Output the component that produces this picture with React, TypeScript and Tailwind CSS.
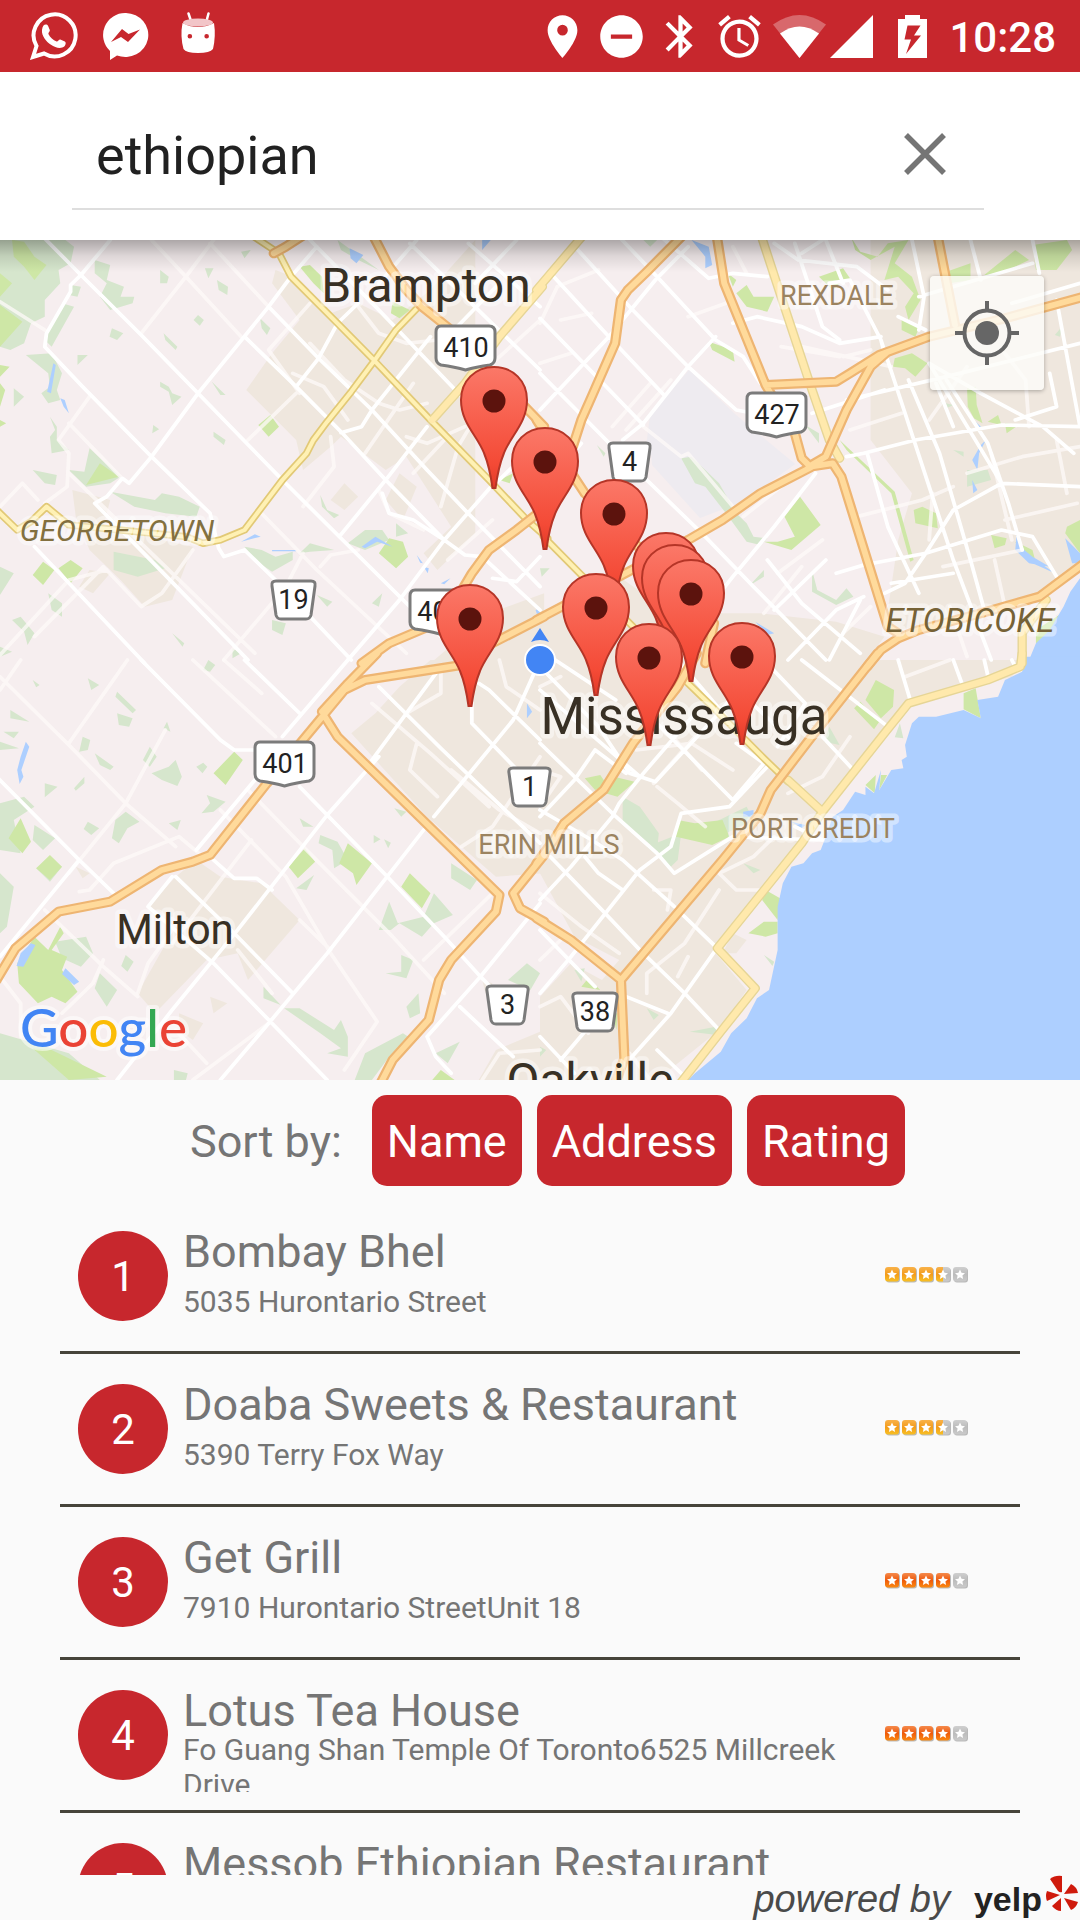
import React, { useState } from "react";
import { MdAlarm, MdBluetooth, MdLocationOn, MdRemoveCircle } from "react-icons/md";

/* ---------- Map data: four tiles, each 1568 x 1260 units ---------- */

type Tile = {
  x: number;
  y: number;
  urban: string;
  forest: string;
  park: string;
  water: string;
  lanes: string;
  streets: string;
  routes: string;
  arterials: string;
  highways: string;
};

const TILES: Tile[] = [
  {
    x: 0,
    y: 240,
    urban:
      "M800,90 L850,110 L960,220 L1040,190 L1140,240 L1250,150 L1380,0 L1380,880 L1340,920 L1270,990 L1230,940 L1310,860 L1180,650 L1120,690 L990,590 L960,620 L880,690 L860,600 L715,450 L790,340 L870,240 L790,130Z M1160,700 L1210,740 L1170,840 L1120,780Z M1000,730 L1040,770 L1000,810 L960,780Z M210,750 L320,780 L300,860 L470,900 L560,920 L500,1080 L420,1100 L350,1020 L260,930 L220,830Z M260,990 L320,1000 L270,1060 L230,1040Z M1250,1270 L1420,1120 L1580,1060 L1580,1270Z",
    forest:
      "M0,0 L190,0 L215,20 L205,70 L170,90 L175,130 L130,180 L130,230 L90,250 L70,310 L30,330 L0,320Z M180,190 L215,200 L150,320 L130,300Z M275,60 L320,75 L310,120 L360,140 L350,170 L390,170 L385,190 L320,210 L290,170 L310,130 L275,100Z M205,135 L235,140 L225,170 L200,165Z M75,345 L150,340 L180,400 L165,450 L175,480 L140,490 L120,460 L145,440 L140,400Z M225,345 L255,345 L225,375Z M465,90 L490,110 L485,130 L465,130Z M595,85 L620,85 L605,115Z M630,120 L662,140 L660,165 L635,150Z M700,35 L728,30 L710,55Z M755,235 L785,265 L775,285 L760,265Z M325,265 L358,280 L340,300 L318,290Z M475,280 L515,320 L510,330 L480,300Z M575,225 L592,240 L580,257 L562,240Z M465,425 L490,440 L500,460 L527,470 L500,495 L490,455 L465,440Z M615,425 L655,465 L640,465Z M620,575 L655,600 L650,615 L620,590Z M445,555 L462,568 L442,580Z M40,445 L70,470 L40,500Z M145,530 L165,560 L165,600 L200,630 L150,640 L145,590 L160,570Z M95,690 L165,705 L160,735 L130,730Z M260,625 L350,710 L320,730 L250,740 L200,690 L245,695Z M320,755 L450,780 L470,760 L520,770 L580,800 L570,830 L480,820 L390,800Z M330,935 L450,960 L480,985 L400,1010 L330,990Z M710,920 L760,930 L800,950 L850,935 L850,960 L790,995 L740,960Z M870,940 L900,910 L970,930 L900,935Z M930,765 L950,810 L985,825 L970,835 L935,800Z M1010,910 L1060,870 L1110,870 L1130,900 L1060,930Z M140,1060 L180,1090 L180,1130 L150,1110Z M35,1140 L60,1130 L100,1180 L80,1215 L70,1175Z M790,1140 L830,1150 L820,1185 L790,1170Z M1080,1090 L1110,1060 L1100,1100Z M920,1065 L965,1085 L950,1100Z M500,1180 L535,1210 L530,1220Z M1150,850 L1185,880 L1150,890Z M0,980 L40,1000 L0,1065Z M0,1220 L35,1235 L0,1250Z M675,1225 L700,1240 L675,1255Z M980,0 L1100,90 L1040,60 L990,30Z",
    park:
      "M35,0 L70,5 L100,50 L135,75 L100,120 L70,80 L40,50Z M0,100 L35,130 L0,170Z M0,195 L65,245 L0,320Z M0,375 L28,380 L0,410Z M0,430 L15,450 L0,500Z M750,555 L785,525 L810,560 L780,590Z M870,80 L900,75 L935,110 L940,160 L910,130Z M1130,895 L1170,905 L1185,950 L1150,985 L1100,940Z M95,1005 L125,965 L158,990 L125,1035Z M250,735 L290,670 L345,710Z M170,985 L205,960 L240,985 L205,1030Z M1140,185 L1190,210 L1160,235 L1135,220Z M1450,720 L1490,700 L1480,730Z M0,540 L18,550 L0,560Z",
    water:
      "M1015,25 L1055,45 L1035,70 L1018,55Z M1400,0 L1425,0 L1400,30Z M155,370 L162,375 L148,460 L137,455Z M175,475 L188,480 L200,520 L185,500Z M1050,920 L1090,890 L1140,920 L1095,905 L1060,925Z M700,905 L740,883 L757,890Z M790,930 L860,930 L860,934 L790,934Z M1210,945 L1228,970 L1220,968Z M1230,980 L1245,985 L1242,1000Z M1280,1030 L1308,1015 L1290,1033Z M1555,1110 L1568,1105 L1568,1150Z",
    lanes:
      "M440,0 L540,110 L700,290 M620,0 L540,110 L410,280 M610,10 L780,200 M0,185 L130,270 M900,190 L780,330 L870,460 M860,460 L720,600 M260,470 L170,600 L200,640 L195,740 L130,790 M200,550 L350,710 M200,700 L420,920 L740,1240 M0,800 L65,730 L110,780 M560,930 L470,1060 L410,1100 L300,980 L100,1190 M310,990 L200,1020 L0,1245 M750,810 L920,990 L1180,1240 M880,940 L830,1040 L650,1260 M930,980 L960,945 L1040,930 M960,590 L970,680 L880,800 M1040,200 L1100,280 L1180,310 L1270,300 M900,310 L1000,420 L1100,490 L1160,510 L1240,490 M850,400 L940,440 L1010,540 M1200,430 L1060,640 M1290,600 L1200,700 M1400,500 L1330,620 L1280,800 M1350,560 L1240,610 L1180,590 M1568,240 L1440,360 M1430,840 L1300,960 M1100,750 L1130,820 L1230,870",
    streets:
      "M115,-20 L235,105 L410,285 L575,460 L820,720 L990,895 L1180,1090 L1350,1260 M320,0 L235,105 L205,135 L205,155 L135,280 L130,320 L240,440 L440,650 L610,820 L635,925 L650,950 L710,930 L800,1020 L1020,1260 M920,20 L845,110 L780,200 L575,460 L440,650 L375,730 L355,715 L310,770 L275,790 L470,995 L720,1260 M100,920 L420,1270 M780,200 L925,355 L1080,510 L1240,690 L1350,810 L1568,1040 M710,290 L860,440 L990,575 L1120,720 L1290,900 L1350,945 L1400,950 L1568,1110 M900,0 L1100,210 L1350,480 M1190,10 L1568,390 M1360,10 L1568,200 M1040,190 L980,250 L925,355 L860,440 M1250,290 L1080,510 L1050,560 L990,578 M1450,130 L1290,300 M1240,560 L1120,720 L985,890 M1430,735 L1290,900 L1160,1080 L1010,1260 M1430,1015 L1500,1025 L1568,950 M1110,760 L1130,820 L1200,840 L1290,900 M1210,0 L1100,130 M1568,600 L1430,740 M1500,0 L1380,130",
    routes:
      "M730,-15 L810,40 L845,110 L980,250 L1085,360 L1250,540 L1420,720 L1530,840 L1590,895 M1220,195 L1150,270 L1085,365 L1020,455 L950,545 L910,600 L890,640 L820,720 L710,870 L640,900 L590,910 L540,890 L200,855 L135,800 L90,845 L50,870 L-10,810",
    arterials: "M1575,140 L1450,290 L1350,430 L1255,540",
    highways:
      "M890,-20 L830,20 L795,40 M1080,-20 L1130,80 L1180,150 L1225,200 L1310,270 L1430,400 L1580,560 M1580,805 L1500,870 L1420,930 L1370,1000 L1290,1140 L1130,1210 L1050,1270 M1580,1130 L1420,1215",
  },
  {
    x: 540,
    y: 240,
    urban:
      "M960,0 L1568,0 L1568,1000 L1450,1080 L1000,1180 L1040,900 L1080,760 L960,600Z M430,1120 L640,1120 L860,1145 L1000,1190 L950,1260 L0,1260 L0,1130 L200,1040Z M230,1010 L340,1090 L320,1170 L240,1150Z",
    forest:
      "M410,655 L440,650 L520,730 L570,820 L600,850 L620,890 L660,895 L640,915 L600,905 L540,820 L480,740 L450,730Z M165,615 L190,640 L185,650Z M790,990 L805,1050 L860,1080 L890,1045 L910,1070 L860,1095 L790,1055Z M610,1035 L650,990 L650,1010Z M1160,485 L1200,495 L1180,505Z M1200,630 L1230,635 L1230,650Z M300,0 L340,0 L320,20Z M1240,690 L1300,690 L1310,720 L1240,740Z M0,985 L28,985 L5,1010Z M770,555 L810,580 L810,610Z M1495,285 L1515,260 L1510,290Z",
    park:
      "M905,-5 L930,35 L980,50 L1010,10 L1070,0 L1030,70 L1080,110 L1105,180 L1070,240 L1060,200 L1085,160 L1040,110 L1000,120 L1030,20 L960,60 L915,30Z M1430,15 L1530,0 L1545,30 L1500,90 L1440,90Z M570,160 L600,135 L620,170 L680,170 L660,215 L600,200Z M810,110 L880,85 L910,130 L880,120 L850,150Z M1180,95 L1250,70 L1250,120 L1190,130Z M1290,105 L1380,30 L1420,60 L1330,105Z M490,305 L560,330 L565,365 L500,330Z M1050,235 L1100,265 L1090,290 L1050,270Z M1030,355 L1080,340 L1125,370 L1090,410 L1060,385 L1025,380Z M1240,445 L1265,440 L1268,495 L1285,550 L1260,535 L1242,500Z M1300,545 L1330,525 L1340,555Z M1350,550 L1390,555 L1355,580Z M870,600 L1030,755 L1085,960 L1075,965 L1020,760 L890,630Z M755,770 L815,855 L730,930 L650,905 L690,905 L740,890 L710,830Z M1085,810 L1110,800 L1150,820 L1155,865 L1090,850Z M1310,885 L1355,895 L1350,915 L1320,925Z M1380,905 L1430,930 L1440,970 L1400,945Z M1530,860 L1568,840 L1568,940 L1525,880Z M1440,1170 L1530,1110 L1490,1210 L1440,1210Z M545,100 L570,120 L560,140Z",
    water:
      "M440,0 L490,20 L500,75 L480,85 L480,50Z M1525,895 L1568,940 L1568,970 L1545,970Z M1575,1005 L1540,1055 L1520,1100 L1480,1170 L1440,1210 L1420,1260 L1575,1265Z M1295,600 L1275,640 L1270,690 L1255,660 L1280,615Z M1255,720 L1270,750 L1258,760Z M1385,870 L1395,920 L1430,950 L1480,980 L1420,970 L1380,930Z M1400,945 L1440,960 L1495,1000 L1430,970Z M1265,545 L1290,570 L1275,570Z M625,1145 L680,1180 L660,1185Z",
    lanes:
      "M0,250 L50,140 L170,90 M0,370 L90,340 M60,240 L150,220 M430,230 L540,190 M300,560 L410,650 L430,640 L560,800 M320,430 L210,560 M380,420 L250,570 M560,20 L600,100 M880,350 L960,330 M700,320 L870,350 M900,570 L1050,520 M920,830 L1110,780 L1200,740 M1240,700 L1400,650 L1568,620 M1350,840 L1560,790 M1140,760 L1130,900 M1170,980 L1400,930 M1310,640 L1370,900 M1500,600 L1530,760 M650,1120 L760,980 M590,830 L700,740 M820,900 L690,1000 M1130,540 L1240,380 M760,320 L1020,380 M1350,340 L1410,420 L1420,560 M1190,1100 L1240,1250 M1320,960 L1350,1100 M880,1180 L960,1100",
    streets:
      "M110,30 L260,200 L430,380 L570,510 L620,520 M40,110 L200,290 L360,465 M0,235 L300,555 M0,400 L230,640 L470,880 L620,1040 L830,1260 M220,-20 L340,110 L510,300 L590,350 L640,430 M340,-20 L490,115 L560,100 L660,110 M430,20 L335,120 L200,290 L0,510 M510,290 L430,380 L300,550 L240,600 M120,610 L0,760 M800,700 L680,860 L560,1010 L430,1180 M560,250 L630,230 L760,260 L870,310 L990,290 M680,10 L750,60 L920,80 L1010,150 M740,10 L820,260 L870,300 M760,40 L820,0 M840,130 L900,120 L990,300 L1060,520 L1200,960 L1310,1260 M830,0 L880,130 M1080,0 L1115,170 L1100,270 M1250,0 L1280,120 M1430,0 L1450,100 M990,300 L1000,340 M890,650 L940,640 L1090,600 L1340,555 L1568,560 M860,1000 L940,975 L1120,940 L1340,870 L1430,890 L1500,1010 M890,480 L1180,410 L1568,310 M1000,1060 L1060,1030 L1120,940 L1200,810 L1340,730 L1568,740 M1070,420 L1160,640 L1250,960 L1290,1110 M1130,370 L1340,730 M1130,370 L1280,460 L1460,560 L1550,640 M1180,420 L1300,610 L1360,790 L1400,930 M790,520 L1000,450 M950,640 L1010,860 L1100,1060 M1480,400 L1500,500 L1380,540 M1040,230 L1120,270 M1100,170 L1430,70 M1370,190 L1568,130 M1500,180 L1568,560 M1200,560 L1150,430 M940,1070 L860,1110 L720,1260 M830,960 L680,1110 M930,1080 L840,1260 M1020,1030 L1200,1000 M660,960 L760,1090 L930,1240",
    routes: "M10,890 L120,1005 L270,1160 L380,1280",
    arterials:
      "M130,-20 L-10,150 M640,-20 L700,170 L780,420 L840,600 L870,655 M1470,1080 L1400,1180 L1400,1270",
    highways:
      "M430,-30 L310,95 L255,150 L235,180 L218,310 L150,470 L120,540 L95,620 M512,-20 L535,130 L655,435 L860,425 L900,400 L985,345 L1130,290 L1350,235 L1580,170 M1153,-20 L1205,255 M1010,335 L960,380 L890,510 L830,650 L780,680 M655,435 L740,580 L760,655 L785,680 L850,670 L875,710 L1010,1160 L1040,1180 M790,680 L640,760 L530,840 L430,900 L230,1010 L-10,1140 M-10,540 L130,760 L420,1060 L505,1150 L480,1270 M1580,970 L1450,1070 L1280,1120 L1100,1170 L1040,1195 L990,1230 L950,1280",
  },
  {
    x: 0,
    y: 660,
    urban:
      "M1090,160 L1160,80 L1250,0 L1580,0 L1580,640 L1440,650 L1240,470 L1020,220Z M510,650 L570,600 L640,650 L760,670 L870,780 L720,960 L690,880 L600,900 L450,1060 L400,1000 L520,780 L430,740Z M520,1060 L590,1090 L560,1140 L520,1110Z M610,1010 L660,1030 L620,1060Z M220,620 L260,640 L240,655Z M1440,1170 L1580,1110 L1580,1260 L1390,1260Z M1400,960 L1430,970 L1410,1000Z",
    forest:
      "M0,430 L70,410 L100,440 L40,480 L60,580 L0,570Z M0,640 L40,680 L20,800 L0,820Z M100,495 L160,535 L125,570 L95,540Z M145,600 L180,620 L145,665 L105,625Z M255,485 L288,505 L265,525 L243,507Z M365,455 L405,485 L370,505 L345,550 L325,535 L335,480Z M490,490 L525,480 L515,510Z M600,405 L655,425 L620,455 L585,460 L610,430Z M435,260 L455,290 L435,320 L415,300Z M440,340 L490,320 L510,300 L528,350 L515,378 L470,360Z M340,95 L395,150 L385,160 L335,110Z M340,160 L385,175 L375,200 L345,195Z M240,230 L262,240 L255,270 L230,275Z M275,280 L330,320 L320,330 L290,315Z M30,150 L85,185 L30,175Z M10,215 L55,215 L40,235Z M0,245 L55,265 L0,270Z M255,55 L288,75 L265,90Z M95,60 L115,75 L105,82Z M485,185 L495,215 L475,205Z M130,370 L167,380 L130,412Z M215,385 L245,350 L245,370 L220,392Z M590,30 L605,0 L625,15 L610,35Z M570,320 L590,308 L602,320 L588,340Z M930,525 L980,545 L1010,600 L970,625 L965,570 L925,550Z M870,475 L910,500 L880,500Z M860,685 L912,645 L890,690Z M1130,725 L1155,790 L1230,770 L1260,700 L1315,765 L1260,790 L1225,830 L1160,790 L1135,810 L1100,810Z M1310,610 L1385,660 L1365,690 L1310,655Z M1165,885 L1200,900 L1180,955 L1120,940 L1165,935Z M1085,525 L1105,538 L1085,550Z M1115,538 L1135,548 L1127,565Z M765,980 L815,1035 L765,1015Z M825,1045 L870,1045 L970,1110 L990,1080 L1010,1130 L1010,1190 L950,1180 L990,1165 L930,1120Z M160,845 L250,830 L270,880 L235,920 L180,895Z M290,940 L340,990 L310,1040 L275,985Z M365,885 L388,905 L370,935 L352,918Z M1180,1040 L1215,1000 L1220,1060 L1190,1075Z M1060,1180 L1170,1120 L1200,1140 L1130,1190 L1080,1260 L1030,1260Z M1265,1180 L1335,1145 L1300,1210Z M1475,960 L1530,910 L1568,940 L1540,990Z M0,1120 L200,1180 L290,1260 L0,1260Z M505,1230 L545,1240 L540,1260 L505,1260Z M1145,445 L1180,455 L1165,470Z",
    park:
      "M100,830 L140,870 L175,800 L185,820 L150,870 L195,890 L180,930 L225,995 L190,1030 L150,1010 L110,1030 L55,970 L50,910Z M60,475 L90,545 L65,580 L25,535Z M145,585 L180,620 L145,660 L105,625Z M680,275 L705,300 L655,375 L620,340Z M885,565 L915,605 L865,655 L838,620Z M1010,550 L1080,610 L1035,675 L1025,640 L985,610Z M1190,640 L1250,700 L1225,745 L1165,680Z M95,1165 L150,1170 L310,1250 L200,1260Z M1280,1230 L1320,1260 L1255,1260Z",
    water:
      "M75,245 L85,260 L62,330 L68,350 L57,372 L50,330 L60,290Z M90,850 L103,855 L68,920 L48,918 L60,880Z M190,925 L230,965 L215,975 L180,942Z M1530,130 L1545,155 L1530,175Z",
    lanes:
      "M0,50 L200,255 L365,430 L510,560 M480,210 L365,430 L200,640 M560,0 L800,230 M650,0 L760,100 M370,0 L200,250 M230,695 L260,690 L330,610 L520,530 L600,600 M720,390 L890,570 L1140,830 L1290,1000 M640,450 L830,650 L960,880 M730,540 L500,850 M870,780 L960,870 M960,880 L1095,1085 L1000,1230 M690,870 L790,1000 M130,750 L300,920 L400,1010 M300,900 L270,970 L180,1060 M400,1000 L430,910 L520,780 M510,1110 L600,1210 M780,1090 L560,1260 M1430,700 L1230,900 M0,90 L60,0 M0,950 L60,1030 L60,1130 M1080,130 L1250,280 L1420,440 M1180,160 L1280,100 L1280,20 M1210,250 L1190,330 L1270,410 M1568,290 L1430,500 L1340,560 M1450,0 L1470,80 L1568,150 M1310,330 L1450,450 L1568,520 M1400,1260 L1450,1180 L1568,1170",
    streets:
      "M-10,350 L230,600 L330,700 M410,0 L640,240 L680,270 L740,270 M870,380 L950,465 L1120,645 L1290,830 L1395,950 L1520,1080 M710,0 L870,160 M1010,0 L820,230 M740,360 L570,570 M1100,290 L950,465 L690,810 L500,1050 L340,1260 M1230,510 L950,880 L780,1090 L640,1260 M230,600 L0,890 M500,650 L430,740 L620,910 L950,1260 M510,650 L680,820 L850,1000 M620,600 L680,655 L745,655 L790,690 M1568,730 L1395,950 L1240,1130 L1265,1190 L1310,1240 M1100,80 L1280,265 L1568,550 M1280,20 L1080,300 M1390,70 L1420,90 L1568,240 M1370,0 L1370,190 L1568,400 M1490,180 L1260,470 M1335,1040 L1490,1190 M1568,0 L1490,180",
    routes: "",
    arterials: "",
    highways:
      "M1095,-20 L1010,70 L935,155 M1340,15 L1060,60 L1000,90 L940,165 L980,230 L1450,705 L1440,755 L1310,900 L1275,960 L1245,1080 L1140,1200 L1105,1270 M940,165 L775,370 L610,585 L560,605 L470,630 L320,725 L170,755 L45,865 L-10,960 M1580,585 L1490,700 L1510,745 L1580,785",
  },
  {
    x: 540,
    y: 660,
    urban:
      "M0,0 L1400,0 L1370,50 L1230,90 L1080,130 L960,280 L840,450 L700,640 L510,880 L600,990 L520,1110 L340,1260 L0,1260 L0,1010 L90,910 L180,960 L230,900 L100,830 L0,640Z M560,820 L600,840 L570,880 L530,880Z",
    forest:
      "M240,410 L290,440 L345,520 L340,570 L240,490Z M310,560 L410,520 L400,600 L380,620Z M480,500 L600,440 L620,480 L540,520Z M590,610 L640,630 L620,640Z M435,1115 L510,1100 L515,1125Z M310,1045 L345,1065 L330,1080Z M650,885 L680,905 L675,918Z M840,200 L870,255 L825,245Z M1045,190 L1055,235 L1030,232Z M100,930 L130,925 L120,965Z M0,1160 L18,1170 L0,1190Z",
    park:
      "M975,60 L1028,90 L1025,140 L990,175 L945,120Z M930,125 L985,185 L970,208 L912,145Z M1230,100 L1265,85 L1280,175 L1230,148Z M130,355 L175,345 L195,375 L160,390Z M215,350 L275,365 L225,410 L190,400Z M400,480 L450,490 L530,480 L550,530 L500,555 L395,530Z M655,690 L697,715 L690,780 L645,720Z M650,785 L690,785 L690,820 L655,830 L605,820Z M945,375 L975,345 L972,400Z M990,345 L1008,345 L985,390Z M140,955 L175,990 L120,980Z M210,1060 L225,1060 L222,1110Z",
    water:
      "M1410,-10 L1400,35 L1350,60 L1330,110 L1270,120 L1280,175 L1230,150 L1150,170 L1100,170 L1080,190 L1060,255 L1065,290 L1050,300 L1055,325 L1020,330 L985,390 L990,330 L970,400 L945,380 L945,405 L915,395 L880,450 L850,470 L830,530 L815,570 L790,580 L765,610 L730,620 L705,670 L690,740 L690,870 L665,990 L630,1015 L600,1075 L555,1120 L525,1175 L450,1240 L420,1270 L1580,1270 L1580,-10Z M590,455 L620,450 L620,470 L590,470Z M730,485 L770,495 L760,505Z",
    lanes:
      "M1060,50 L1190,0 M820,350 L900,230 M720,400 L820,350 M480,500 L400,430 L340,380 M520,640 L620,590 L680,530 M520,640 L570,690 L640,690 M520,690 L420,850 L310,940 L310,1000 M0,700 L120,800 L230,880 M330,690 L380,690 L370,750 M430,890 L400,950 M0,1040 L60,1010 L140,1120 M0,440 L60,350 L0,330 M360,200 L470,330 M260,1180 L320,1260 M450,230 L330,370 M60,840 L0,900 M280,270 L440,250 L560,330 M0,80 L60,50",
    streets:
      "M0,20 L170,200 L260,340 L335,365 L510,170 L650,0 M160,270 L100,360 L0,470 M0,90 L290,350 M30,-10 L220,120 M0,250 L210,460 L340,580 L390,640 L560,530 L820,540 M0,720 L90,620 L210,470 L230,430 L300,340 L450,160 M30,590 L180,750 L290,870 L420,1000 L520,1110 M0,450 L150,540 L240,600 L390,740 M160,270 L250,340 M330,180 L560,420 M660,320 L550,440 L410,460 L380,560 L290,630 L90,890 L0,1000 M0,810 L160,980 M415,765 L510,860 M510,870 L380,1060 L250,1210 M250,1010 L370,1060 M400,0 L540,170 M480,0 L740,250 M650,0 L770,130 M820,230 L910,330 M760,0 L1010,200 M1040,0 L1075,120 M1200,0 L1225,70 M1290,0 L1300,45 M1370,0 L1380,20 M570,250 L650,310 M650,310 L560,420 M820,540 L740,500 M60,1200 L200,1030 M0,1130 L100,1240 M340,1170 L410,1240 M130,590 L170,640 L240,690 M770,130 L690,260",
    routes: "M370,0 L430,70 L520,160 L650,295 L720,365",
    arterials:
      "M1400,-20 L1395,20 L1300,60 L1070,130 L1000,220 L820,455 L760,550 L515,865 L625,985 L525,1115 L400,1280 M720,360 L820,455",
    highways:
      "M-10,775 L90,840 L235,960 L245,1195 L215,1280 M980,-20 L800,215 L700,350 L670,390 L640,460 L530,600 L235,960 M455,-20 L400,80 L270,250 L185,390 L70,490 L40,540 L-10,610",
  },
];

function Tiles({ children }: { children: (t: Tile) => React.ReactNode }) {
  return (
    <>
      {TILES.map((t) => (
        <g key={`${t.x}-${t.y}`} transform={`translate(${t.x} ${t.y}) scale(0.3444 0.3333)`}>
          {children(t)}
        </g>
      ))}
    </>
  );
}

const PINS = [
  [494, 489],
  [545, 550],
  [614, 602],
  [666, 655],
  [675, 667],
  [691, 682],
  [470, 707],
  [596, 696],
  [649, 746],
  [742, 745],
];

const PROVINCIAL = [
  { x: 434, y: 324, n: "410" },
  { x: 745, y: 391, n: "427" },
  { x: 408, y: 588, n: "401" },
  { x: 253, y: 740, n: "401" },
];

const REGIONAL = [
  { x: 270, y: 579, w: 47, n: "19" },
  { x: 607, y: 441, w: 45, n: "4" },
  { x: 507, y: 766, w: 45, n: "1" },
  { x: 485, y: 984, w: 45, n: "3" },
  { x: 571, y: 991, w: 48, n: "38" },
];

const PLACES = [
  { t: "Brampton", x: 426, y: 302, cls: "fill-[#383024] text-[48px]" },
  { t: "Mississauga", x: 684, y: 734, cls: "fill-[#383024] text-[51px]" },
  { t: "Milton", x: 175, y: 944, cls: "fill-[#383024] text-[42px]" },
  { t: "Oakville", x: 590, y: 1097, cls: "fill-[#383024] text-[48px]" },
  { t: "GEORGETOWN", x: 117, y: 541, cls: "fill-[#83703f] text-[30px] italic" },
  { t: "ETOBICOKE", x: 970, y: 632, cls: "fill-[#766236] text-[33px] italic" },
  { t: "REXDALE", x: 837, y: 305, cls: "fill-[#9b8360] text-[27px]" },
  { t: "ERIN MILLS", x: 549, y: 854, cls: "fill-[#9b8360] text-[27px]" },
  { t: "PORT CREDIT", x: 813, y: 838, cls: "fill-[#9b8360] text-[27px]" },
];

function MapDrawing() {
  return (
    <svg
      className="block h-full w-full font-[Roboto,sans-serif]"
      viewBox="0 240 1080 840"
      preserveAspectRatio="xMidYMid slice"
      role="img"
      aria-label="Map of Mississauga with ten search results"
    >
      <defs>
        <linearGradient id="pin" x1="0" y1="0" x2="0" y2="1">
          <stop offset="0" stopColor="#fb7868" />
          <stop offset="0.8" stopColor="#f44a36" />
          <stop offset="1" stopColor="#e23a28" />
        </linearGradient>
      </defs>
      <rect x="0" y="240" width="1080" height="840" fill="#f6eeef" />
      <Tiles>{(t) => <path d={t.urban} fill="#efe7de" />}</Tiles>
      <path d="M689 370 L740 420 L795 464 L742 502 L700 518 L652 465 L650 434Z" fill="#eeebf0" />
      <path d="M689 370 L650 415 L645 455 L690 455 L735 515 L745 500 L795 464 L735 414Z" fill="#eeebf0" />
      <Tiles>
        {(t) => (
          <>
            <path d={t.forest} fill="#d6e6cd" />
            <path d={t.park} fill="#cee7a6" />
            <path d={t.water} fill="#adcfff" />
          </>
        )}
      </Tiles>
      <g fill="none" strokeLinejoin="round" strokeLinecap="round">
        <Tiles>{(t) => <path d={t.lanes} stroke="#fdf9f8" strokeOpacity="0.75" strokeWidth="11" />}</Tiles>
        <Tiles>{(t) => <path d={t.streets} stroke="#ffffff" strokeWidth="11" />}</Tiles>
        <Tiles>
          {(t) => (
            <>
              <path d={t.routes} stroke="#e2c976" strokeWidth="22" />
              <path d={t.arterials} stroke="#e6d596" strokeWidth="27" />
            </>
          )}
        </Tiles>
        <Tiles>
          {(t) => (
            <>
              <path d={t.routes} stroke="#fff1b4" strokeWidth="12" />
              <path d={t.arterials} stroke="#ffe9ac" strokeWidth="19" />
            </>
          )}
        </Tiles>
        <Tiles>{(t) => <path d={t.highways} stroke="#eeb572" strokeWidth="30" />}</Tiles>
        <Tiles>{(t) => <path d={t.highways} stroke="#ffda9b" strokeWidth="17" />}</Tiles>
      </g>

      {PLACES.map((p) => (
        <text
          key={p.t}
          x={p.x}
          y={p.y}
          textAnchor="middle"
          className={p.cls}
          stroke="#ffffff"
          strokeOpacity="0.45"
          strokeWidth="9"
          strokeLinejoin="round"
          paintOrder="stroke"
        >
          {p.t}
        </text>
      ))}

      <g fill="#ffffff" stroke="#7b7b7b" strokeWidth="3">
        {PROVINCIAL.map((s) => (
          <g key={`${s.x}${s.y}`} transform={`translate(${s.x} ${s.y})`}>
            <path d="M7 2H55Q61 2 61 8V34Q61 39 56 41Q42 43 31.500 46Q21 43 7 41Q2 39 2 34V8Q2 2 7 2Z" />
            <text x="32" y="33" textAnchor="middle" fill="#222222" stroke="none" className="text-[27px]">
              {s.n}
            </text>
          </g>
        ))}
        {REGIONAL.map((s) => (
          <g key={s.n} transform={`translate(${s.x} ${s.y})`}>
            <path d={`M6 2H${s.w - 6}Q${s.w - 1} 2 ${s.w - 2} 7L${s.w - 6} 36Q${s.w - 7} 40 ${s.w - 11} 40H11Q7 40 6 36L2 7Q1 2 6 2Z`} />
            <text x={s.w / 2} y="30" textAnchor="middle" fill="#222222" stroke="none" className="text-[27px]">
              {s.n}
            </text>
          </g>
        ))}
      </g>

      <path d="M540 628L549 642Q540 638 531 642Z" fill="#4285f4" />
      <circle cx="540" cy="660" r="15" fill="#4285f4" stroke="#ffffff" strokeWidth="2" />

      {PINS.map(([x, y]) => (
        <g key={`${x}-${y}`} transform={`translate(${x} ${y})`}>
          <path
            d="M0-122C-19-122-33-108-33-89C-33-66-17-54-10-36C-5-24-3-12-1.500-1H1.500C3-12 5-24 10-36C17-54 33-66 33-89C33-108 19-122 0-122Z"
            fill="url(#pin)"
            stroke="#b53527"
            strokeWidth="2"
          />
          <circle cy="-88" r="11.500" fill="#5c130d" />
        </g>
      ))}

      <text
        x="20"
        y="1047"
        className="font-[Lato,sans-serif] text-[53px] font-medium"
        stroke="#ffffff"
        strokeOpacity="0.5"
        strokeWidth="8"
        strokeLinejoin="round"
        paintOrder="stroke"
      >
        <tspan fill="#4285f4">G</tspan>
        <tspan fill="#ea4335">o</tspan>
        <tspan fill="#fbbc05">o</tspan>
        <tspan fill="#4285f4">g</tspan>
        <tspan fill="#34a853">l</tspan>
        <tspan fill="#ea4335">e</tspan>
      </text>
    </svg>
  );
}

/* ---------- Status bar ---------- */

function StatusBar() {
  return (
    <div className="flex h-[72px] shrink-0 items-center bg-[#c7272d] pr-6 pl-[30px] text-white">
      <svg className="h-12 w-12" viewBox="0 0 48 48" aria-hidden="true">
        <path d="M3 45L6.500 34A21 21 0 1 1 14 41.500Z" fill="none" stroke="#fff" strokeWidth="4" strokeLinejoin="miter" />
        <path
          d="M13.500 13.500c1-1.200 3.700-1.500 4.500.3l1.800 4.200c.5 1.300-1.800 2.700-1.400 3.900 1.800 3.500 4.600 6 8.200 7.600 1.200.5 2.400-2.300 3.700-1.900l4.500 2c1.600.8.8 3.600-.3 4.700-2.400 2.200-6.200 2-9.200.8-6-2.400-10.700-6.900-12.800-12.500-1-2.900-.7-6.600 1-9.100z"
          fill="#fff"
        />
      </svg>
      <svg className="ml-6 h-12 w-12" viewBox="0 0 48 48" aria-hidden="true">
        <path
          d="M24 1A23 22 0 1 1 15 43.500L8 48V39A22 22 0 0 1 24 1ZM9 30L20 17L26.500 22L38 17.500L26 30L19 25Z"
          fill="#fff"
          fillRule="evenodd"
        />
      </svg>
      <svg className="ml-6 h-12 w-12" viewBox="0 0 48 48" aria-hidden="true">
        <path d="M14.500 1.500L17 9M34.500 1.500L32.500 9" stroke="#fff" strokeWidth="2.500" strokeLinecap="round" />
        <ellipse cx="24" cy="10.500" rx="15" ry="4" fill="#f2c5c8" />
        <path
          d="M8.500 11Q15 15 24 15T40 11Q42 24 39 37Q36 41 24 41T9.500 37Q6 24 8.500 11ZM15.800 22a2.300 2.300 0 1 0 .1 4.600a2.300 2.300 0 0 0-.1-4.600ZM32.600 22a2.300 2.300 0 1 0 .1 4.600a2.300 2.300 0 0 0-.1-4.600Z"
          fill="#fff"
          fillRule="evenodd"
        />
      </svg>

      <div className="ml-auto flex items-center">
        <div className="flex gap-2">
          <MdLocationOn size={51} />
          <MdRemoveCircle size={51} />
          <MdBluetooth size={51} />
          <MdAlarm size={51} />
        </div>
        <svg className="ml-2 h-[43px] w-[53px]" viewBox="0 0 53 43" aria-hidden="true">
          <path d="M0 9.500Q26.500-9.500 53 9.500L26.500 43Z" fill="#fff" fillOpacity="0.3" />
          <path d="M7 18.500Q26.500 4.500 46 18.500L26.500 43Z" fill="#fff" />
        </svg>
        <svg className="ml-1 h-[43px] w-[43px]" viewBox="0 0 43 43" aria-hidden="true">
          <path d="M43 0V43H0Z" fill="#fff" />
        </svg>
        <svg className="ml-[25px] h-[43px] w-[29px]" viewBox="0 0 29 43" aria-hidden="true">
          <path d="M7 0H22V4H29V43H0V4H7ZM9.500 10.500L6.500 24.500H13L8 39L23 20.500H16L22.500 10.500Z" fill="#fff" fillRule="evenodd" />
        </svg>
        <span className="ml-[22px] pt-[3px] text-[42px] leading-[48px] font-medium">10:28</span>
      </div>
    </div>
  );
}

/* ---------- Rating ---------- */

function Rating({ value }: { value: number }) {
  const warm = value >= 4 ? "url(#warm4)" : "url(#warm3)";
  return (
    <svg className="h-4 w-[84px]" viewBox="0 0 84 16" role="img" aria-label={`${value} out of 5 stars`}>
      {[0, 1, 2, 3, 4].map((i) => {
        const part = Math.max(0, Math.min(1, value - i));
        return (
          <g key={i} transform={`translate(${i * 17} 0)`}>
            <rect x="1" y="1" width="14" height="14.500" rx="3" fill="#b9b9b9" />
            <rect width="14" height="14.500" rx="3" fill={part === 1 ? warm : "url(#cold)"} />
            {part === 0.5 && <path d="M7 0H3Q0 0 0 3V11.500Q0 14.500 3 14.500H7Z" fill={warm} />}
            <path
              d="M7 2.500L8.500 5.800L12 6.200L9.400 8.600L10.100 12L7 10.300L3.900 12L4.600 8.600L2 6.200L5.500 5.800Z"
              fill="#fff"
            />
          </g>
        );
      })}
    </svg>
  );
}

function RatingGradients() {
  return (
    <svg className="absolute h-0 w-0" aria-hidden="true">
      <defs>
        <linearGradient id="warm3" x1="0" y1="0" x2="0" y2="1">
          <stop offset="0" stopColor="#f9b24a" />
          <stop offset="0.5" stopColor="#f39c1c" />
          <stop offset="1" stopColor="#f8c023" />
        </linearGradient>
        <linearGradient id="warm4" x1="0" y1="0" x2="0" y2="1">
          <stop offset="0" stopColor="#f58a4c" />
          <stop offset="0.5" stopColor="#ee5a0c" />
          <stop offset="1" stopColor="#fb8a10" />
        </linearGradient>
        <linearGradient id="cold" x1="0" y1="0" x2="0" y2="1">
          <stop offset="0" stopColor="#cfcfcf" />
          <stop offset="0.5" stopColor="#bcbcbc" />
          <stop offset="1" stopColor="#cacaca" />
        </linearGradient>
      </defs>
    </svg>
  );
}

const PLACES_FOUND = [
  { name: "Bombay Bhel", address: "5035 Hurontario Street", rating: 3.5 },
  { name: "Doaba Sweets & Restaurant", address: "5390 Terry Fox Way", rating: 3.5 },
  { name: "Get Grill", address: "7910 Hurontario StreetUnit 18", rating: 4 },
  { name: "Lotus Tea House", address: "Fo Guang Shan Temple Of Toronto6525 Millcreek Drive", rating: 4 },
  { name: "Messob Ethiopian Restaurant", address: "", rating: 0 },
];

export default function App() {
  const [query, setQuery] = useState("ethiopian");
  return (
    <div className="flex h-screen flex-col overflow-hidden bg-[#fafafa] font-[Roboto,sans-serif] text-[#757575]">
      <StatusBar />
      <header className="h-[168px] shrink-0 bg-white pt-[30px] pr-24 pl-[72px]">
        <form
          className="flex h-[108px] items-center border-b-2 border-[#dedede] pr-8 pl-6"
          onSubmit={(e) => e.preventDefault()}
        >
          <input
            type="text"
            aria-label="Search restaurants"
            className="min-w-0 flex-1 bg-transparent pt-0.5 text-[54px] leading-[64px] text-[#212121] outline-none"
            value={query}
            onChange={(e) => setQuery(e.target.value)}
          />
          <button type="button" aria-label="Clear search" className="p-1" onClick={() => setQuery("")}>
            <svg className="h-[46px] w-[46px]" viewBox="0 0 46 46" aria-hidden="true">
              <path d="M4 3L42 41M42 3L4 41" stroke="#757575" strokeWidth="5.500" />
            </svg>
          </button>
        </form>
      </header>

      <section className="relative h-[840px] shrink-0 overflow-hidden" aria-label="Map">
        <MapDrawing />
        <div className="absolute inset-x-0 top-0 h-8 bg-linear-to-b from-black/30 via-black/10 to-transparent" />
        <button
          type="button"
          aria-label="Show my location"
          className="absolute top-9 right-9 grid h-[114px] w-[114px] place-items-center rounded-[4px] bg-[#fcfcf9]/80 shadow-[0_1px_4px_rgba(0,0,0,0.3)]"
        >
          <svg className="h-16 w-16" viewBox="0 0 64 64" aria-hidden="true">
            <circle cx="32" cy="32" r="22.500" fill="none" stroke="#666666" strokeWidth="4" />
            <circle cx="32" cy="32" r="12" fill="#666666" />
            <path d="M32 0V9M32 55V64M0 32H9M55 32H64" stroke="#666666" strokeWidth="4" />
          </svg>
        </button>
      </section>

      <div className="flex h-[121px] shrink-0 items-start justify-center gap-[15px] pt-[15px] text-[45px] leading-[88px]">
        <span className="px-[15px] pt-[3px]">Sort by:</span>
        {["Name", "Address", "Rating"].map((label) => (
          <button key={label} type="button" className="rounded-[15px] bg-[#c7272d] px-[15px] pt-[3px] text-white">
            {label}
          </button>
        ))}
      </div>

      <RatingGradients />
      <ol className="min-h-0 flex-1 overflow-y-auto px-[60px] [scrollbar-width:none]">
        {PLACES_FOUND.map((p, i) => (
          <li key={p.name} className="flex h-[153px] items-start border-b-3 border-[#46443a] pr-[51px] pl-[18px]">
            <span className="mt-[30px] grid h-[90px] w-[90px] shrink-0 place-items-center rounded-full bg-[#c7272d] pt-0.5 text-[42px] leading-[48px] text-white">
              {i + 1}
            </span>
            <div className="min-w-0 flex-1 pt-[30px] pr-4 pl-[15px]">
              <h2 className="text-[45px] leading-[42px] whitespace-nowrap">{p.name}</h2>
              <div className="flex h-[60px] overflow-hidden">
                <p className="my-auto pb-1 text-[30px] leading-[35px]">{p.address}</p>
              </div>
            </div>
            <div className="flex h-[148px] items-center">{p.rating > 0 && <Rating value={p.rating} />}</div>
          </li>
        ))}
      </ol>

      <footer className="flex h-[45px] shrink-0 items-center justify-end font-['Liberation_Sans',sans-serif] leading-[42px]">
        <span className="pt-[3px] text-[38px] text-[#4a4a4a] italic">powered by</span>
        <span className="ml-6 pt-[3px] text-[34px] font-bold text-[#222222]">yelp</span>
        <svg className="mb-2 ml-1 h-[37px] w-[34px]" viewBox="0 0 34 37" aria-hidden="true">
          <g fill="#cf1a0c">
            <path d="M4 4Q9 0 16 1L16 17Q14 18 12 16Z" />
            <path d="M1 16L14 20L1 26Q-1 21 1 16Z" />
            <path d="M15 23V36Q10 36 6 31Z" />
            <path d="M18 23L32 27Q30 33 25 35Z" />
            <path d="M18 19L25 9Q31 12 32 18Z" />
          </g>
        </svg>
      </footer>
    </div>
  );
}
